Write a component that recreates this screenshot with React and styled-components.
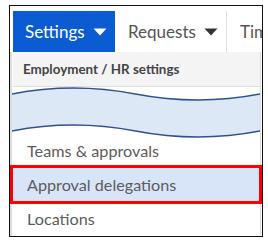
import React from 'react'
import styled, { createGlobalStyle } from 'styled-components'

const GlobalStyle = createGlobalStyle`
  html, body {
    margin: 0;
    padding: 0;
    background: #fff;
  }
  body {
    font-family: 'Lato', 'Liberation Sans', sans-serif;
  }
`

const Frame = styled.div`
  box-sizing: border-box;
  margin: 5px 0 0 9px;
  width: 254px;
  height: 232px;
  border: 1px solid #111;
  padding-top: 5px;
  overflow: hidden;
  background: #fff;
`

const NavBar = styled.div`
  display: flex;
  align-items: stretch;
  height: 41px;
  margin-left: 3px;
  white-space: nowrap;
`

const NavTab = styled.div`
  display: flex;
  align-items: center;
  gap: ${({ gap = 10 }) => gap}px;
  box-sizing: border-box;
  width: ${({ width }) => (width ? `${width}px` : 'auto')};
  padding-left: ${({ pad = 13 }) => pad}px;
  font-size: 17px;
  color: ${({ active }) => (active ? '#fff' : '#555')};
  background: ${({ active }) => (active ? '#0b5bd3' : '#fff')};
  border-right: ${({ divider }) => (divider ? '1px solid #e2e2e2' : 'none')};
  flex-shrink: 0;
`

const Caret = ({ color }) => (
  <svg width="14" height="8" viewBox="0 0 14 8">
    <path d="M0.5 0.5 L13.5 0.5 L7 7.5 Z" fill={color} />
  </svg>
)

const Panel = styled.div`
  box-sizing: border-box;
  margin-right: 1px;
  border-left: 2px solid #dcdcdc;
  border-right: 1px solid #dcdcdc;
`

const PanelHeader = styled.div`
  display: flex;
  align-items: center;
  height: 34px;
  margin-left: 1px;
  padding-left: 10px;
  background: #f4f4f4;
  border-bottom: 1px solid #dedede;
  font-size: 13.4px;
  font-weight: 700;
  color: #444;
  white-space: nowrap;
`

const Wave = styled.svg`
  display: block;
  width: 100%;
  height: 53px;
`

const Item = styled.div`
  display: flex;
  align-items: center;
  box-sizing: border-box;
  height: ${({ h }) => h}px;
  padding: 0 0 ${({ pb = 0 }) => pb}px 15px;
  font-size: 16.2px;
  color: #5c5c5c;
  white-space: nowrap;
`

const SelectedItem = styled(Item)`
  margin-left: -2px;
  margin-right: -2px;
  border: 3px solid #ff0000;
  padding-left: 14px;
  background: #d8e5f8;
`

export default function App() {
  return (
    <>
      <GlobalStyle />
      <Frame>
        <NavBar>
          <NavTab active width={102} pad={12} gap={8}>
            Settings <Caret color="#fff" />
          </NavTab>
          <NavTab divider width={112} pad={13} gap={8}>
            Requests <Caret color="#333" />
          </NavTab>
          <NavTab pad={13}>Time</NavTab>
        </NavBar>
        <Panel>
          <PanelHeader>Employment / HR settings</PanelHeader>
          <Wave viewBox="0 0 251 53" preserveAspectRatio="none">
            <path
              d="M0 7 Q62 -5 125 7 T251 7 L251 44 Q188 56 125 44 T0 44 Z"
              fill="#dce8f6"
            />
            <path d="M0 7 Q62 -5 125 7 T251 7" fill="none" stroke="#2f5190" strokeWidth="1.3" />
            <path d="M0 44 Q62 32 125 44 T251 44" fill="none" stroke="#2f5190" strokeWidth="1.3" />
          </Wave>
          <Item h={25} pb={4}>Teams &amp; approvals</Item>
          <SelectedItem h={39}>Approval delegations</SelectedItem>
          <Item h={32} pb={3}>Locations</Item>
        </Panel>
      </Frame>
    </>
  )
}
